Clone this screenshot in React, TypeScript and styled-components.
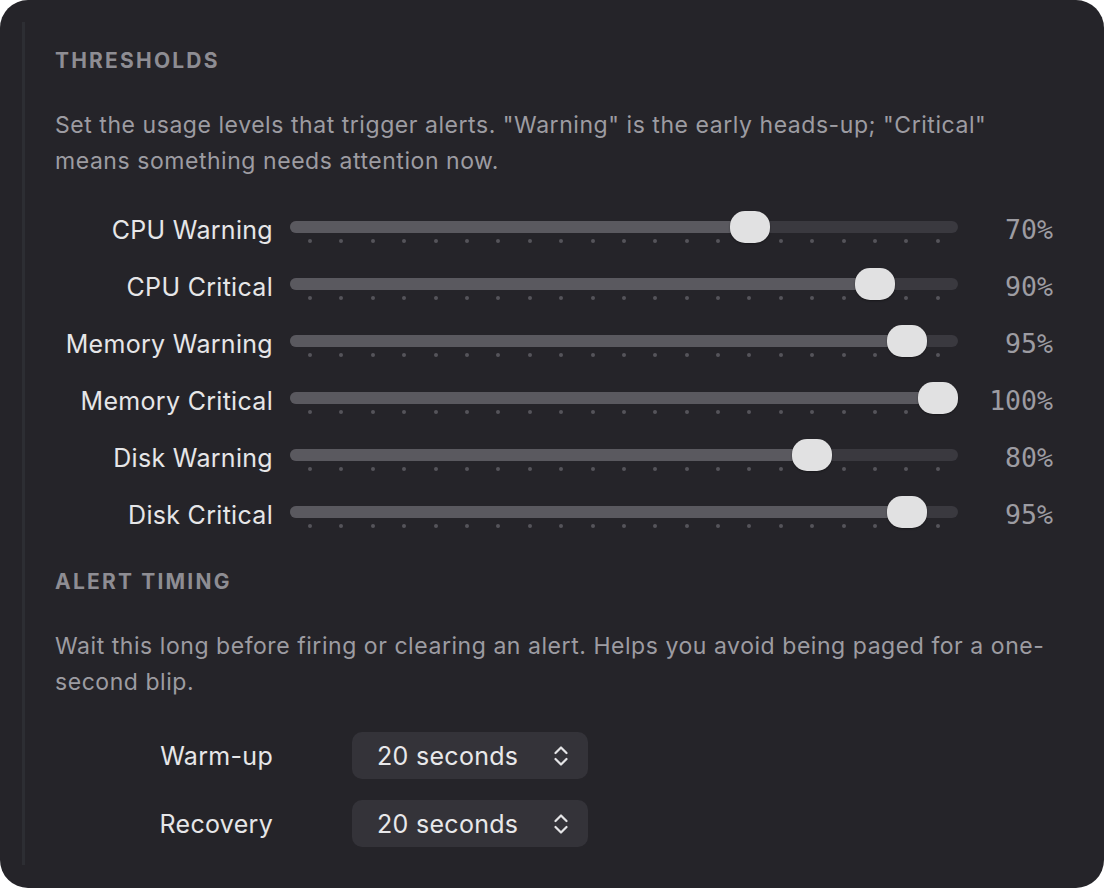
import React from 'react';
import styled, { createGlobalStyle } from 'styled-components';

const GlobalStyle = createGlobalStyle`
  html, body {
    margin: 0;
    padding: 0;
    background: #ffffff;
  }
  body {
    font-family: Inter, "Noto Sans", "Liberation Sans", sans-serif;
    -webkit-font-smoothing: antialiased;
  }
`;

const Panel = styled.div`
  width: 1104px;
  height: 888px;
  box-sizing: border-box;
  background: #252429;
  border-radius: 28px;
  padding: 22px 0 23px 22px;
`;

const Content = styled.div`
  height: 100%;
  box-sizing: border-box;
  border-left: 3px solid #2d2e33;
  padding: 26px 51px 0 30px;
`;

const SectionTitle = styled.h2`
  margin: 0;
  font-size: 21px;
  line-height: 26px;
  font-weight: 700;
  letter-spacing: 2.2px;
  color: #8e8d93;
`;

const Description = styled.p`
  margin: 33px 0 0;
  font-size: 23px;
  line-height: 36px;
  letter-spacing: 0.55px;
  color: #9d9ca2;
`;

const Rows = styled.div`
  display: flex;
  flex-direction: column;
  margin-top: 22px;
`;

const SliderRow = styled.div`
  display: grid;
  grid-template-columns: 218px 668px 1fr;
  column-gap: 17px;
  height: 57px;
  align-items: center;
`;

const Label = styled.div`
  text-align: right;
  font-size: 25px;
  letter-spacing: 0.3px;
  color: #e6e6e8;
  white-space: nowrap;
`;

const SliderBox = styled.div`
  position: relative;
  align-self: stretch;
  padding-top: 20px;
  box-sizing: border-box;
`;

const Track = styled.div`
  position: relative;
  height: 12px;
  border-radius: 6px;
  background: #3a393f;
`;

const Fill = styled.div`
  position: absolute;
  left: 0;
  top: 0;
  bottom: 0;
  border-radius: 6px;
  background: #5a595f;
`;

const Thumb = styled.div`
  position: absolute;
  top: -10px;
  width: 40px;
  height: 32px;
  margin-left: -20px;
  border-radius: 15px;
  background: #e1e1e2;
  box-shadow: 0 1px 2px rgba(0, 0, 0, 0.35);
`;

const Ticks = styled.div`
  display: flex;
  justify-content: space-between;
  padding: 0 18px;
  margin-top: 6px;
`;

const Tick = styled.span`
  width: 4px;
  height: 4px;
  border-radius: 50%;
  background: #55545a;
`;

const Value = styled.div`
  text-align: right;
  font-family: "DejaVu Sans Mono", "Liberation Mono", monospace;
  font-size: 26.5px;
  color: #9d9ca2;
`;

const TimingTitle = styled(SectionTitle)`
  margin-top: 26px;
`;

const TimingRows = styled.div`
  display: flex;
  flex-direction: column;
  gap: 21px;
  margin-top: 32px;
`;

const TimingRow = styled.div`
  display: grid;
  grid-template-columns: 218px 236px;
  column-gap: 79px;
  align-items: center;
`;

const Select = styled.div`
  height: 47px;
  box-sizing: border-box;
  border-radius: 10px;
  background: #343339;
  display: flex;
  align-items: center;
  justify-content: space-between;
  padding: 0 20px 0 25px;
  font-size: 25px;
  letter-spacing: 0.3px;
  color: #e8e8ea;
`;

const thresholds = [
  { label: 'CPU Warning', value: 70 },
  { label: 'CPU Critical', value: 90 },
  { label: 'Memory Warning', value: 95 },
  { label: 'Memory Critical', value: 100 },
  { label: 'Disk Warning', value: 80 },
  { label: 'Disk Critical', value: 95 },
];

const timings = [
  { label: 'Warm-up', value: '20 seconds' },
  { label: 'Recovery', value: '20 seconds' },
];

const UpDown = () => (
  <svg width="14" height="22" viewBox="0 0 14 22" fill="none">
    <path d="M1.5 8 L7 2.5 L12.5 8" stroke="#e4e4e6" strokeWidth="2.2" strokeLinecap="round" strokeLinejoin="round" />
    <path d="M1.5 14 L7 19.5 L12.5 14" stroke="#e4e4e6" strokeWidth="2.2" strokeLinecap="round" strokeLinejoin="round" />
  </svg>
);

const Slider = ({ value }: { value: number }) => {
  // thumb centre travels between 20px and width-20px
  const pos = `calc(20px + (100% - 40px) * ${value / 100})`;
  return (
    <SliderBox>
      <Track>
        <Fill style={{ width: pos }} />
        <Thumb style={{ left: pos }} />
      </Track>
      <Ticks>
        {Array.from({ length: 21 }).map((_, i) => (
          <Tick key={i} />
        ))}
      </Ticks>
    </SliderBox>
  );
};

const App = () => {
  return (
    <>
      <GlobalStyle />
      <Panel>
        <Content>
          <SectionTitle>THRESHOLDS</SectionTitle>
          <Description>
            Set the usage levels that trigger alerts. "Warning" is the early heads-up; "Critical" means something needs
            attention now.
          </Description>
          <Rows>
            {thresholds.map(t => (
              <SliderRow key={t.label}>
                <Label>{t.label}</Label>
                <Slider value={t.value} />
                <Value>{t.value}%</Value>
              </SliderRow>
            ))}
          </Rows>
          <TimingTitle>ALERT TIMING</TimingTitle>
          <Description>
            Wait this long before firing or clearing an alert. Helps you avoid being paged for a one-second blip.
          </Description>
          <TimingRows>
            {timings.map(t => (
              <TimingRow key={t.label}>
                <Label>{t.label}</Label>
                <Select>
                  <span>{t.value}</span>
                  <UpDown />
                </Select>
              </TimingRow>
            ))}
          </TimingRows>
        </Content>
      </Panel>
    </>
  );
};

export default App;
